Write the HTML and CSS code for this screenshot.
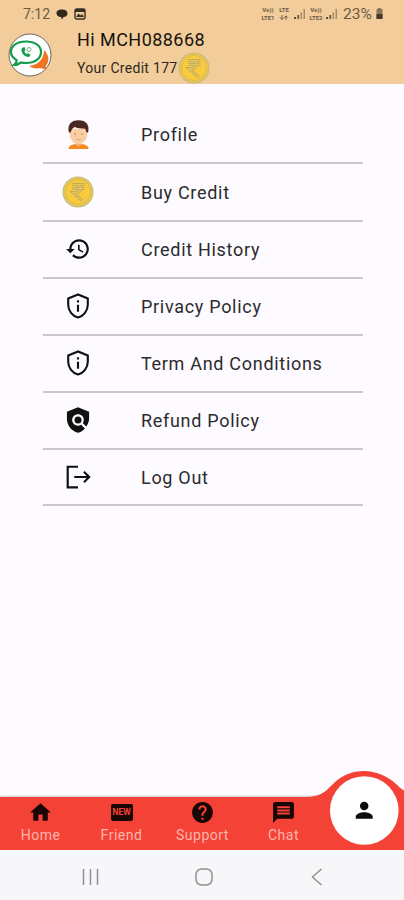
FILE: index.html
```html
<!DOCTYPE html>
<html lang="en">
  <head>
    <meta charset="utf-8">
    <title>Account</title>
    <link rel="stylesheet" href="styles.css">
  </head>
  <body>
    <svg class="defs">
      <symbol id="coin" viewBox="0 0 32 32">
        <circle cx="16" cy="16" r="15.5" fill="#c3b87a"/>
        <circle cx="16" cy="16" r="14.6" fill="#e6c858"/>
        <circle cx="16" cy="16" r="12.6" fill="#fbc93c" stroke="#d8ba55" stroke-width="1"/>
        <path d="M10 8.5h12.5M10 12.5h12.5M11 8.500h3c6 0 6 8 0 8h-3l9.500 8.500" fill="none" stroke="#b5a561" stroke-width="2.800"/>
        <path d="M10 8.500h12.500M10 12.500h12.500M11 8.500h3c6 0 6 8 0 8h-3l9.500 8.500" fill="none" stroke="#e3c65c" stroke-width="1.400"/>
      </symbol>
      <symbol id="shield-info" viewBox="0 0 24 24">
        <path d="M12 2.100L3.600 5.600V11c0 5 3.600 9.600 8.400 10.900 4.800-1.300 8.400-5.900 8.400-10.900V5.600z" fill="none" stroke="#111" stroke-width="1.800"/>
        <path d="M11.100 11h1.800v6h-1.800zM11.100 7h1.800v2h-1.800z" fill="#111"/>
      </symbol>
      <symbol id="signal" viewBox="0 0 12 10">
        <path d="M0 8h2v2H0zM3.500 6h1.500v4H3.500z" fill="#5d4c37"/>
        <path d="M6.500 3.500H8V10H6.500zM9.500 0H11v10H9.500z" fill="#a58a68"/>
      </symbol>
    </svg>

    <header class="header">
      <div class="status">
        <span class="time">7:12</span>
        <svg class="status-icon" viewBox="0 0 12 12"><path d="M6 1.500c3.300 0 5.500 1.500 5.500 4S9.500 9 7.500 9L6 11.500 5 9C2.500 9 .5 8 .5 5.300S2.700 1.500 6 1.500z" fill="#2f271c"/></svg>
        <svg class="status-icon picture" viewBox="0 0 12 12"><rect x="1" y="1" width="10" height="10" rx="1.500" fill="none" stroke="#3a3024" stroke-width="1.400"/><path d="M1 1h10v3H1zM2 9l2.500-3.500 2 2L8 6l2 3z" fill="#3a3024"/></svg>
        <div class="status-right">
          <div class="net"><span>Vo))</span><span>LTE1</span></div>
          <div class="net lte"><span>LTE</span><svg viewBox="0 0 10 5"><path d="M3 0v4M1 2.500l2 2 2-2M7 5V1M5.500 2.500L7 .8l1.500 1.700"/></svg></div>
          <svg class="signal"><use href="#signal"/></svg>
          <div class="net"><span>Vo))</span><span>LTE2</span></div>
          <svg class="signal"><use href="#signal"/></svg>
          <span class="percent">23%</span>
          <svg class="battery" viewBox="0 0 8 11"><path d="M2.500 0h3v1H7v10H1V1h1.500z" fill="#8b7454"/><path d="M1 6h6v5H1z" fill="#44382a"/></svg>
        </div>
      </div>
      <div class="user">
        <svg class="logo" viewBox="0 0 44 44">
          <circle cx="22" cy="22" r="21" fill="#fff" stroke="#6f6a60" stroke-width="1"/>
          <path d="M36 17c4 4 6 9 3 14-1 2-2 2 0 5-4 0-5-.5-7-1-4 1-8 0-11-2 8-1 15-6 15-16z" fill="#ee7623"/>
          <path d="M18 8.500c9 0 15 4 15 10.500s-6 11-15 11c-2 0-3 0-5-.5-2 1.500-4 2.500-7 2.500 2-1.500 3-3 2.500-5C5 25 3 22.500 3 19 3 12.500 9 8.500 18 8.500z" fill="#fff" stroke="#139c4b" stroke-width="2.200"/>
          <path d="M14 15c-2 4 2 9 7 9l1.500-2-2.500-2-1.500 1c-1.500-.8-2-2-2-3l1-1-1-3z" fill="#139c4b"/>
          <circle cx="21" cy="16.500" r="2" fill="none" stroke="#5fb987"/>
        </svg>
        <div class="user-info">
          <div class="user-name">Hi MCH088668</div>
          <div class="credit">Your Credit 177<svg class="coin"><use href="#coin"/></svg></div>
        </div>
      </div>
    </header>

    <ul class="menu">
      <li class="menu-item">
        <svg class="avatar" viewBox="0 0 24 32">
          <path d="M1.500 31c0-3 3-4.500 8-5h5c5 .5 8 2 8 5z" fill="#f7891f"/>
          <path d="M9 22h6v4.500l-3 2-3-2z" fill="#f0b98c"/>
          <path d="M3 10h18v7c0 5-5 9-9 9s-9-4-9-9z" fill="#fbcda4"/>
          <path d="M2 14C0 6 4 1 12 1s12 5 10 13h-1.500L19 10c-5 0-9-.5-11-2-1 1.500-3 2-3 3l-1.500 3z" fill="#49291f"/>
          <path d="M7.500 15.500h2M14.500 15.500h2" stroke="#a87f66" stroke-width="1.200"/>
          <path d="M9.500 21q2.500 1.500 5 0" fill="none" stroke="#e69c80"/>
        </svg>
        <span>Profile</span>
      </li>
      <li class="menu-item">
        <svg class="coin"><use href="#coin"/></svg>
        <span>Buy Credit</span>
      </li>
      <li class="menu-item">
        <svg class="icon" viewBox="0 0 24 24"><path d="M13 3c-4.970 0-9 4.030-9 9H1l3.890 3.890.07.14L9 12H6c0-3.870 3.130-7 7-7s7 3.130 7 7-3.130 7-7 7c-1.930 0-3.680-.79-4.940-2.060l-1.420 1.420C8.270 19.990 10.510 21 13 21c4.970 0 9-4.030 9-9s-4.030-9-9-9zm-1 5v5l4.280 2.540.72-1.210-3.500-2.080V8H12z"/></svg>
        <span>Credit History</span>
      </li>
      <li class="menu-item">
        <svg class="icon shield"><use href="#shield-info"/></svg>
        <span>Privacy Policy</span>
      </li>
      <li class="menu-item">
        <svg class="icon shield"><use href="#shield-info"/></svg>
        <span>Term And Conditions</span>
      </li>
      <li class="menu-item">
        <svg class="icon shield" viewBox="0 0 24 24"><path d="M21.500 5L12 1 2.500 5v6c0 5.550 4 10.740 9.500 12 2.300-.56 4.330-1.900 5.880-3.710l-3.120-3.120c-1.940 1.290-4.580 1.070-6.290-.64-1.950-1.950-1.950-5.120 0-7.070 1.950-1.950 5.120-1.950 7.070 0 1.710 1.710 1.920 4.350.64 6.290l2.900 2.900c1.400-1.900 2.420-4.270 2.420-6.650V5z"/><circle cx="12" cy="12" r="3"/></svg>
        <span>Refund Policy</span>
      </li>
      <li class="menu-item">
        <svg class="icon" viewBox="0 0 24 24"><path d="M12 2.500H2.500v19H12M8.500 12h14M17.500 7.200l4.800 4.800-4.800 4.800" fill="none" stroke="#111" stroke-width="2"/></svg>
        <span>Log Out</span>
      </li>
    </ul>

    <nav class="tabs">
      <div class="tab">
        <svg viewBox="0 0 24 24"><path d="M10 20v-6h4v6h5v-8h3L12 3 2 12h3v8z"/></svg>
        <span>Home</span>
      </div>
      <div class="tab">
        <div class="new"><b>NEW</b></div>
        <span>Friend</span>
      </div>
      <div class="tab">
        <svg viewBox="0 0 24 24"><path d="M12 2C6.480 2 2 6.480 2 12s4.480 10 10 10 10-4.480 10-10S17.520 2 12 2zm1 17h-2v-2h2v2zm2.070-7.750l-.9.92C13.450 12.900 13 13.500 13 15h-2v-.5c0-1.100.45-2.100 1.170-2.830l1.240-1.260c.37-.36.59-.86.59-1.410 0-1.100-.9-2-2-2s-2 .9-2 2H8c0-2.210 1.790-4 4-4s4 1.790 4 4c0 .88-.36 1.680-.93 2.250z"/></svg>
        <span>Support</span>
      </div>
      <div class="tab">
        <svg viewBox="0 0 24 24"><path d="M20 2H4c-1.100 0-1.990.9-1.990 2L2 22l4-4h14c1.100 0 2-.9 2-2V4c0-1.100-.9-2-2-2zm-2 12H6v-2h12v2zm0-3H6V9h12v2zm0-3H6V6h12v2z"/></svg>
        <span>Chat</span>
      </div>
      <svg class="bump" viewBox="0 0 104 81">
        <path d="M0 28h6c14 0 19-5 27-13 9-9 19-13 31-13s23 5 31 12c3 3 5 5 9 7.500V81H0z" fill="#f44336"/>
        <circle cx="64.300" cy="41.500" r="34.300" fill="#fff"/>
        <path d="M12 12c2.210 0 4-1.790 4-4s-1.790-4-4-4-4 1.790-4 4 1.790 4 4 4zm0 2c-2.670 0-8 1.340-8 4v2h16v-2c0-2.660-5.330-4-8-4z" transform="translate(51.500 28.500) scale(1.060)" fill="#0c0c0c"/>
      </svg>
    </nav>

    <footer class="system">
      <svg viewBox="0 0 20 20"><path d="M2.500 2v16M9.500 2v16M16.500 2v16"/></svg>
      <svg viewBox="0 0 20 20"><rect x="2" y="2" width="16" height="16" rx="5.500"/></svg>
      <svg viewBox="0 0 20 20"><path d="M14.500 2l-9 8 9 8"/></svg>
    </footer>
  </body>
</html>
```
FILE: styles.css
```css
html, body {
  margin: 0;
  padding: 0;
  height: 100%;
}
body {
  display: flex;
  flex-direction: column;
  overflow: hidden;
  background: #fdfbff;
  color: #2b2b2d;
  font-family: Roboto, "Liberation Sans", sans-serif;
}
svg {
  display: block;
  flex: none;
}
.defs {
  display: none;
}

/* header */
.header {
  box-sizing: border-box;
  height: 84px;
  background: #f2cd9b;
}
.status {
  display: flex;
  align-items: center;
  height: 27px;
  padding: 0 20px 0 23px;
  color: #6c5a43;
}
.time {
  width: 33px;
  font-size: 14px;
}
.status-icon {
  width: 12px;
  height: 12px;
}
.picture {
  margin-left: 6px;
}
.status-right {
  display: flex;
  align-items: center;
  margin-left: auto;
}
.net {
  display: flex;
  flex-direction: column;
  align-items: center;
  width: 16px;
  margin-right: 2px;
  font-size: 6px;
  font-weight: bold;
  line-height: 8px;
}
.lte {
  width: 12px;
  margin-right: 4px;
}
.lte svg {
  width: 10px;
  height: 5px;
  margin: 1px 0 2px;
  fill: none;
  stroke: #6c5a43;
}
.signal {
  width: 12px;
  height: 10px;
  margin-right: 2px;
}
.percent {
  width: 31px;
  margin-left: 3px;
  font-size: 15.5px;
}
.battery {
  width: 9px;
  height: 11px;
  margin-left: 1px;
}
.user {
  display: flex;
  padding-left: 8px;
}
.logo {
  width: 44px;
  height: 44px;
  margin-top: 6px;
}
.user-info {
  margin-left: 25px;
}
.user-name {
  height: 25px;
  color: #17130e;
  font-size: 18px;
  line-height: 26px;
  letter-spacing: 0.45px;
}
.credit {
  display: flex;
  align-items: center;
  height: 31px;
  color: #2e271e;
  font-size: 14px;
  letter-spacing: 0.3px;
}
.coin {
  width: 32px;
  height: 32px;
}

/* menu */
.menu {
  display: flex;
  flex-direction: column;
  margin: 0;
  padding: 22px 41px 0 43px;
  list-style: none;
}
.menu-item {
  box-sizing: border-box;
  display: grid;
  grid-template-columns: 70px 1fr;
  column-gap: 28px;
  align-items: center;
  height: 56.9px;
  border-bottom: 2px solid #c9c7cb;
  font-size: 18px;
  letter-spacing: 0.7px;
}
.menu-item:nth-child(-n+2) {
  height: 58px;
}
.menu-item svg {
  justify-self: center;
}
.icon {
  width: 26px;
  height: 26px;
  fill: #111;
}
.shield {
  width: 28px;
  height: 28px;
}
.avatar {
  width: 23px;
  height: 31px;
}

/* bottom tabs */
.tabs {
  position: relative;
  display: flex;
  height: 53px;
  margin-top: auto;
  padding-right: 80px;
  background: #f44336;
  box-shadow: 0 -1px 2px rgba(0, 0, 0, 0.2);
}
.bump {
  position: absolute;
  right: 0;
  bottom: 0;
  width: 104px;
  height: 81px;
}
.tab {
  position: relative;
  z-index: 1;
  display: flex;
  flex: 1;
  flex-direction: column;
  align-items: center;
  padding-top: 3px;
  color: #ffb4ab;
  font-size: 14px;
  letter-spacing: 0.5px;
  line-height: 21px;
}
.tab svg {
  width: 25px;
  height: 25px;
  fill: #1a0604;
}
.new {
  display: flex;
  align-items: center;
  justify-content: center;
  width: 22px;
  height: 17px;
  margin: 4px 0;
  border-radius: 2px;
  background: #1a0604;
  color: #f44336;
  font-size: 8.5px;
  letter-spacing: 0;
}

/* android buttons */
.system {
  display: flex;
  justify-content: center;
  gap: 93px;
  align-items: center;
  box-sizing: border-box;
  height: 50px;
  padding: 3px 0 0 4px;
  border-top: 1px solid #fff;
  background: #f7f7f9;
}
.system svg {
  width: 20px;
  height: 20px;
  fill: none;
  stroke: #919193;
  stroke-width: 1.5;
}
```
